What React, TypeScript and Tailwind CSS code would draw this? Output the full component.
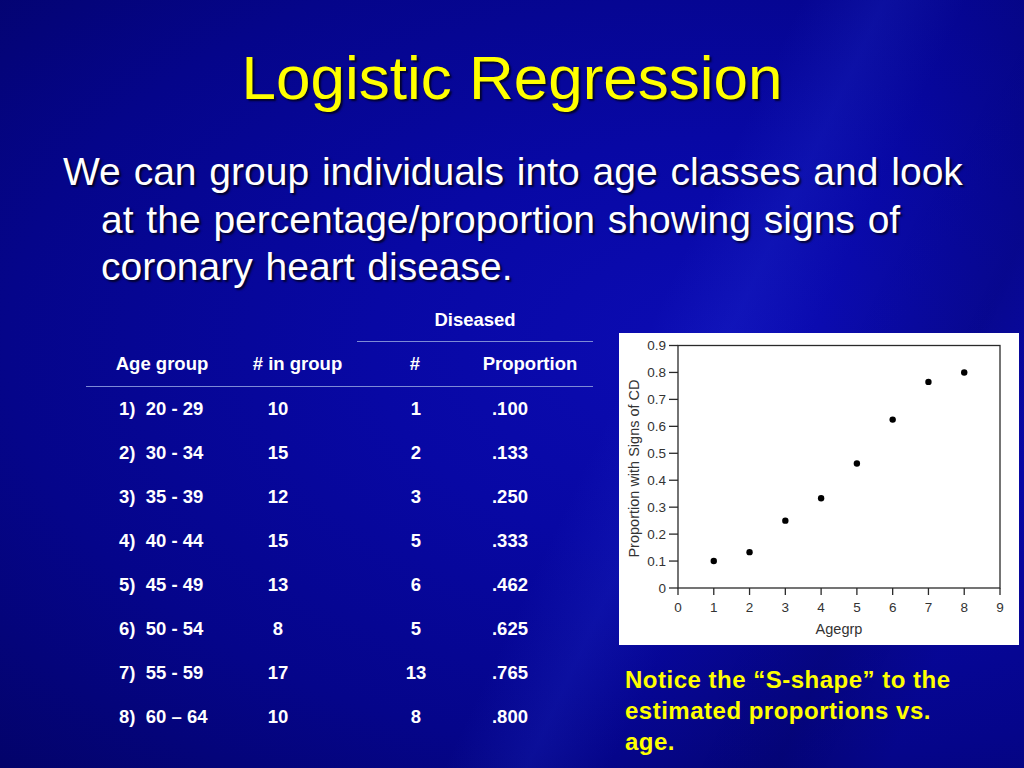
import React from "react";

const rows = [
  ["1)  20 - 29", "10", "1", ".100"],
  ["2)  30 - 34", "15", "2", ".133"],
  ["3)  35 - 39", "12", "3", ".250"],
  ["4)  40 - 44", "15", "5", ".333"],
  ["5)  45 - 49", "13", "6", ".462"],
  ["6)  50 - 54", "8", "5", ".625"],
  ["7)  55 - 59", "17", "13", ".765"],
  ["8)  60 – 64", "10", "8", ".800"],
];

const points = [0.1, 0.133, 0.25, 0.333, 0.462, 0.625, 0.765, 0.8];

// plot box inside the 400x312 chart
const X0 = 59;
const X1 = 381;
const Y0 = 255;
const Y1 = 12.5;
const sx = (v: number) => X0 + ((X1 - X0) * v) / 9;
const sy = (v: number) => Y0 - ((Y0 - Y1) * v) / 0.9;

function Chart() {
  const yTicks = [0, 0.1, 0.2, 0.3, 0.4, 0.5, 0.6, 0.7, 0.8, 0.9];
  const xTicks = [0, 1, 2, 3, 4, 5, 6, 7, 8, 9];
  return (
    <svg width="400" height="312" viewBox="0 0 400 312" className="block bg-white">
      <rect x={X0} y={Y1} width={X1 - X0} height={Y0 - Y1} fill="none" stroke="#2a2a2a" strokeWidth="1.3" />
      {yTicks.map((t) => (
        <g key={t}>
          <line x1={X0 - 9} x2={X0} y1={sy(t)} y2={sy(t)} stroke="#2a2a2a" strokeWidth="1.3" />
          <text
            x={X0 - 12}
            y={sy(t) + 4.5}
            textAnchor="end"
            fontSize="13.5"
            fill="#333"
            fontFamily="'Liberation Sans', Arial, sans-serif"
          >
            {t === 0 ? "0" : t.toFixed(1)}
          </text>
        </g>
      ))}
      {xTicks.map((t) => (
        <g key={t}>
          <line x1={sx(t)} x2={sx(t)} y1={Y0} y2={Y0 + 7} stroke="#2a2a2a" strokeWidth="1.3" />
          <text
            x={sx(t)}
            y={Y0 + 24}
            textAnchor="middle"
            fontSize="13.5"
            fill="#333"
            fontFamily="'Liberation Sans', Arial, sans-serif"
          >
            {t}
          </text>
        </g>
      ))}
      <text
        x={(X0 + X1) / 2}
        y={301}
        textAnchor="middle"
        fontSize="14.5"
        fill="#333"
        fontFamily="'Liberation Sans', Arial, sans-serif"
      >
        Agegrp
      </text>
      <text
        transform="translate(20 135.5) rotate(-90)"
        textAnchor="middle"
        fontSize="14.5"
        fill="#333"
        fontFamily="'Liberation Sans', Arial, sans-serif"
      >
        Proportion with Signs of CD
      </text>
      {points.map((p, i) => (
        <circle key={i} cx={sx(i + 1)} cy={sy(p)} r="3.2" fill="#000" />
      ))}
    </svg>
  );
}

export default function App() {
  return (
    <div
      className="relative w-[1024px] h-[768px] overflow-hidden bg-[linear-gradient(115deg,rgba(0,0,0,0)_0%,rgba(0,0,0,0)_58%,rgba(40,60,220,0.18)_64%,rgba(0,0,0,0)_70%,rgba(0,0,30,0.18)_82%,rgba(0,0,0,0)_90%),radial-gradient(ellipse_at_72%_45%,#0c0cb4_0%,#0808a4_35%,#05058a_70%,#03036a_100%)] text-white"
      style={{ fontFamily: "'Liberation Sans', Arial, sans-serif" }}
    >
      <h1 className="pt-[43px] h-[113px] text-center text-[62px] leading-[70px] text-[#ffff00] [text-shadow:2px_2px_2px_rgba(0,0,0,0.7)]">
        Logistic Regression
      </h1>

      <p className="mt-[35px] pl-[101px] pr-[40px] -indent-[38px] text-[39px] leading-[47.5px] [word-spacing:2px] [text-shadow:2px_2px_2px_rgba(0,0,0,0.7)]">
        We can group individuals into age classes and look at the
        percentage/proportion showing signs of coronary heart disease.
      </p>

      <div className="absolute left-0 top-[298px] flex">
        <div className="ml-[86px] w-[507px] font-bold text-[18.5px]">
          <div className="ml-[271px] w-[236px] h-[44px] flex items-center justify-center border-b border-[#7d8ad6]">
            Diseased
          </div>
          <div className="flex h-[45px] items-center border-b border-[#7d8ad6]">
            <span className="w-[152px] text-center">Age group</span>
            <span className="w-[119px] text-center">
              # in group
            </span>
            <span className="w-[116px] text-center">#</span>
            <span className="w-[114px] text-center">Proportion</span>
          </div>
          {rows.map((r) => (
            <div key={r[0]} className="flex h-[44px] items-center">
              <span className="w-[152px] pl-[33px] whitespace-pre">{r[0]}</span>
              <span className="w-[80px] text-center">{r[1]}</span>
              <span className="ml-[58px] w-[80px] text-center">{r[2]}</span>
              <span className="ml-[14px] w-[80px] text-center">{r[3]}</span>
            </div>
          ))}
        </div>

        <div className="ml-[26px] mt-[35px] flex flex-col">
          <Chart />
          <p className="mt-[19px] ml-[6px] w-[345px] text-[24px] leading-[31px] tracking-[0.5px] font-bold text-[#ffff00]">
            Notice the “S-shape” to the estimated proportions vs. age.
          </p>
        </div>
      </div>
    </div>
  );
}
